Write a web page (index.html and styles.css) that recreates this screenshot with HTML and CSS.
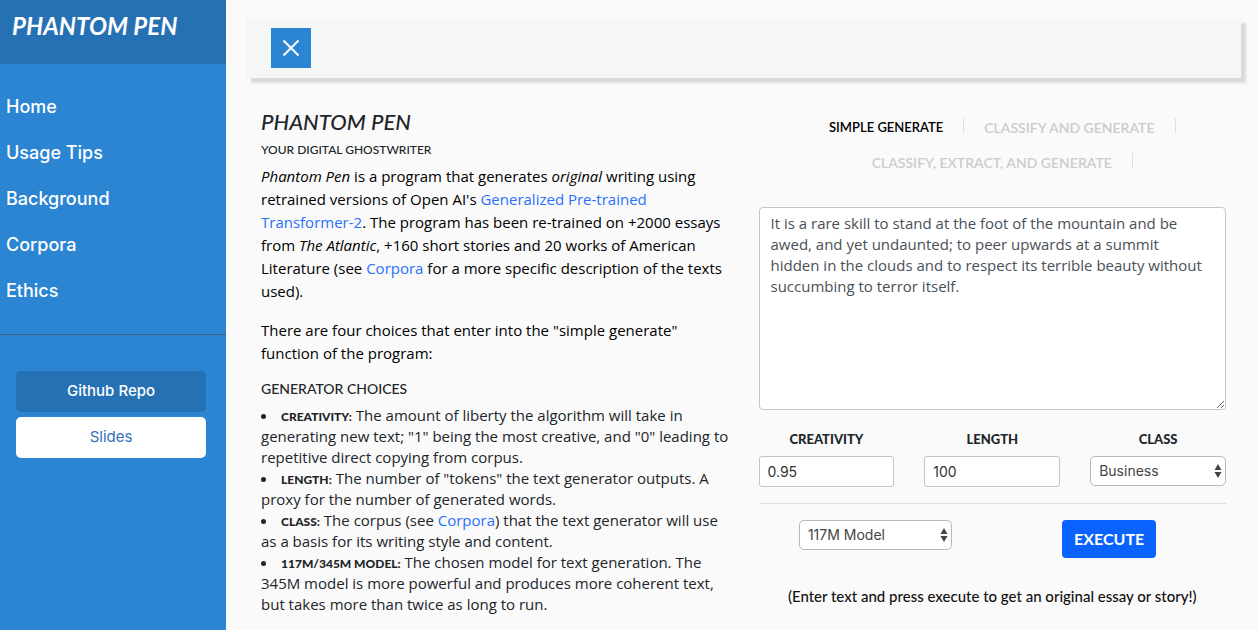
FILE: index.html
```html
<!DOCTYPE html>
<html lang="en">
<head>
<meta charset="utf-8">
<title>Phantom Pen</title>
<link rel="stylesheet" href="styles.css">
</head>
<body>
<div class="page">
  <aside class="sidebar">
    <div class="sidebar-header"><h2 class="brand">PHANTOM PEN</h2></div>
    <nav class="menu">
      <a href="#home">Home</a>
      <a href="#tips">Usage Tips</a>
      <a href="#background">Background</a>
      <a href="#corpora">Corpora</a>
      <a href="#ethics">Ethics</a>
    </nav>
    <div class="sidebar-links">
      <a class="side-button side-button-dark" href="#repo">Github Repo</a>
      <a class="side-button side-button-light" href="#slides">Slides</a>
    </div>
  </aside>
  <main class="content">
    <header class="topbar">
      <button class="toggle" type="button" aria-label="Close menu">
        <svg width="18" height="18" viewBox="0 0 18 18" aria-hidden="true"><path d="M1.5 1.5l15 15M16.5 1.5l-15 15" fill="none" stroke="#fff" stroke-width="2"/></svg>
      </button>
    </header>
    <div class="columns">
      <section class="about">
        <h1 class="title">PHANTOM PEN</h1>
        <p class="subtitle">YOUR DIGITAL GHOSTWRITER</p>
        <p class="text"><i>Phantom Pen</i> is a program that generates <i>original</i> writing using <br>retrained versions of Open AI's <a href="#gpt2">Generalized Pre-trained <br>Transformer-2</a>. The program has been re-trained on +2000 essays <br>from <i>The Atlantic</i>, +160 short stories and 20 works of American <br>Literature (see <a href="#corpora">Corpora</a> for a more specific description of the texts <br>used).</p>
        <p class="text">There are four choices that enter into the "simple generate" <br>function of the program:</p>
        <h2 class="choices-title">GENERATOR CHOICES</h2>
        <ul class="choices">
          <li><b>CREATIVITY:</b> The amount of liberty the algorithm will take in <br>generating new text; "1" being the most creative, and "0" leading to <br>repetitive direct copying from corpus.</li>
          <li><b>LENGTH:</b> The number of "tokens" the text generator outputs. A <br>proxy for the number of generated words.</li>
          <li><b>CLASS:</b> The corpus (see <a href="#corpora">Corpora</a>) that the text generator will use <br>as a basis for its writing style and content.</li>
          <li><b>117M/345M MODEL:</b> The chosen model for text generation. The <br>345M model is more powerful and produces more coherent text, <br>but takes more than twice as long to run.</li>
        </ul>
      </section>
      <section class="generator">
        <nav class="tabs">
          <a class="tab tab-active" href="#simple">SIMPLE GENERATE</a>
          <a class="tab" href="#classify">CLASSIFY AND GENERATE</a>
          <a class="tab" href="#extract">CLASSIFY, EXTRACT, AND GENERATE</a>
        </nav>
        <form class="form">
          <textarea class="prompt" aria-label="Prompt">It is a rare skill to stand at the foot of the mountain and be
awed, and yet undaunted; to peer upwards at a summit
hidden in the clouds and to respect its terrible beauty without
succumbing to terror itself.</textarea>
          <div class="fields">
            <div class="field">
              <label for="creativity">CREATIVITY</label>
              <input class="control" id="creativity" type="text" value="0.95">
            </div>
            <div class="field">
              <label for="length">LENGTH</label>
              <input class="control" id="length" type="text" value="100">
            </div>
            <div class="field">
              <label for="class">CLASS</label>
              <div class="select-box">
                <select class="select" id="class"><option>Business</option></select>
                <svg class="arrows" width="8" height="14" viewBox="0 0 8 14" aria-hidden="true"><path d="M4 0l3.5 6h-7zM4 14l3.5-6h-7z" fill="#444"/></svg>
              </div>
            </div>
          </div>
          <div class="actions">
            <div class="select-box model">
              <select class="select" aria-label="Model"><option>117M Model</option></select>
              <svg class="arrows" width="8" height="14" viewBox="0 0 8 14" aria-hidden="true"><path d="M4 0l3.5 6h-7zM4 14l3.5-6h-7z" fill="#444"/></svg>
            </div>
            <button class="execute" type="button">EXECUTE</button>
          </div>
          <p class="note">(Enter text and press execute to get an original essay or story!)</p>
        </form>
      </section>
    </div>
  </main>
</div>
</body>
</html>
```
FILE: styles.css
```css
* { box-sizing: border-box; }
body {
  margin: 0;
  background: #fafafa;
  color: #212529;
  font-family: "Open Sans", sans-serif;
  font-size: 15px;
}
h1, h2, p, ul { margin: 0; padding: 0; }
a { color: #2970ff; font-weight: 500; text-decoration: none; }

.page { display: flex; min-height: 100vh; }

.sidebar { flex: 0 0 226px; background: #2b85d3; color: #fff; font-family: Inter, sans-serif; }
.sidebar-header { height: 64px; padding: 10px 12px; background: #2670b4; }
.brand {
  font: italic 700 24px/32px Lato, sans-serif;
  white-space: nowrap;
}
.menu {
  display: flex;
  flex-direction: column;
  padding: 20px 0;
  border-bottom: 1px solid #3d5f80;
}
.menu a { padding: 0 6px; color: #fff; font-size: 18px; line-height: 46px; }
.sidebar-links { display: grid; gap: 5px; padding: 36px 20px 20px 16px; }
.side-button { border-radius: 5px; font-size: 15px; line-height: 40px; padding-bottom: 1px; text-align: center; }
.side-button-dark { background: #2670b4; color: #fff; }
.side-button-light { background: #fff; color: #2f70b8; font-weight: 400; }

.content { flex: 1; min-width: 0; padding: 18px 17px 0 20px; }
.topbar {
  padding: 10px 25px;
  background: #f5f7f6;
  box-shadow: 5px 5px 2px #dadada;
}
.toggle {
  display: grid;
  place-items: center;
  width: 40px;
  height: 40px;
  padding: 0;
  border: 0;
  background: #2b85d3;
}
.columns {
  display: grid;
  grid-template-columns: 1fr 1fr;
  gap: 30px;
  padding: 30px 15px 0;
}

.title { font: italic 500 22px/28px Lato, sans-serif; }
.subtitle { margin: 7px 0 8px; font: 500 12px/14px Lato, sans-serif; }
.text { margin-bottom: 16px; color: #000; line-height: 23px; white-space: nowrap; }
.choices-title { margin-bottom: 8px; font: 500 14px/16px Lato, sans-serif; }
.choices { list-style: none; line-height: 21px; white-space: nowrap; }
.choices li::before {
  content: "";
  display: inline-block;
  width: 5px;
  height: 5px;
  margin-right: 15px;
  border-radius: 50%;
  background: #212529;
  vertical-align: middle;
}
.choices b { font: 900 12px/12px Lato, sans-serif; }

.tabs { display: flex; flex-wrap: wrap; justify-content: center; row-gap: 20px; padding: 10px 40px 0; }
.tab {
  padding: 4px 20px 0;
  border-right: 1px solid #e0e0e0;
  color: #ccc;
  font: 600 14px/11px Lato, sans-serif;
}
.tab-active { color: #000; font-size: 13px; }
.prompt {
  display: block;
  width: 100%;
  height: 203px;
  margin-top: 39px;
  padding: 5px 11px;
  border: 1px solid #bfc5cc;
  border-radius: 4px;
  background: #fff;
  color: #495057;
  font: 400 15px/21px "Open Sans", sans-serif;
  resize: both;
}
.fields {
  display: grid;
  grid-template-columns: repeat(3, 1fr);
  gap: 30px;
  padding: 21px 0 16px;
  border-bottom: 1px solid #dcdee0;
}
.field label {
  display: block;
  margin-bottom: 9px;
  font: 900 13px/16px Lato, sans-serif;
  text-align: center;
}
.control {
  display: block;
  width: 100%;
  height: 31px;
  padding: 0 8px;
  border: 1px solid #bfc5cc;
  border-radius: 3px;
  background: #fff;
  color: #333;
  font: 400 14px/21px Inter, sans-serif;
}
.select-box { position: relative; }
.select {
  display: block;
  width: 100%;
  height: 30px;
  padding: 0 8px;
  appearance: none;
  border: 1px solid #b8b8b8;
  border-radius: 5px;
  background: #fff;
  color: #444;
  font: 400 14px/20px Inter, sans-serif;
}
.arrows { position: absolute; top: 8px; right: 4px; }
.actions { display: grid; grid-template-columns: 1fr 1fr; justify-items: center; align-items: start; padding: 16px 0 30px; }
.model { width: 153px; }
.execute {
  height: 38px;
  padding: 0 12px;
  border: 0;
  border-radius: 4px;
  background: #0a62ff;
  color: #fff;
  font: 700 16px/24px Lato, sans-serif;
}
.note { color: #111; font: 500 15px/16px Lato, sans-serif; text-align: center; }
```
